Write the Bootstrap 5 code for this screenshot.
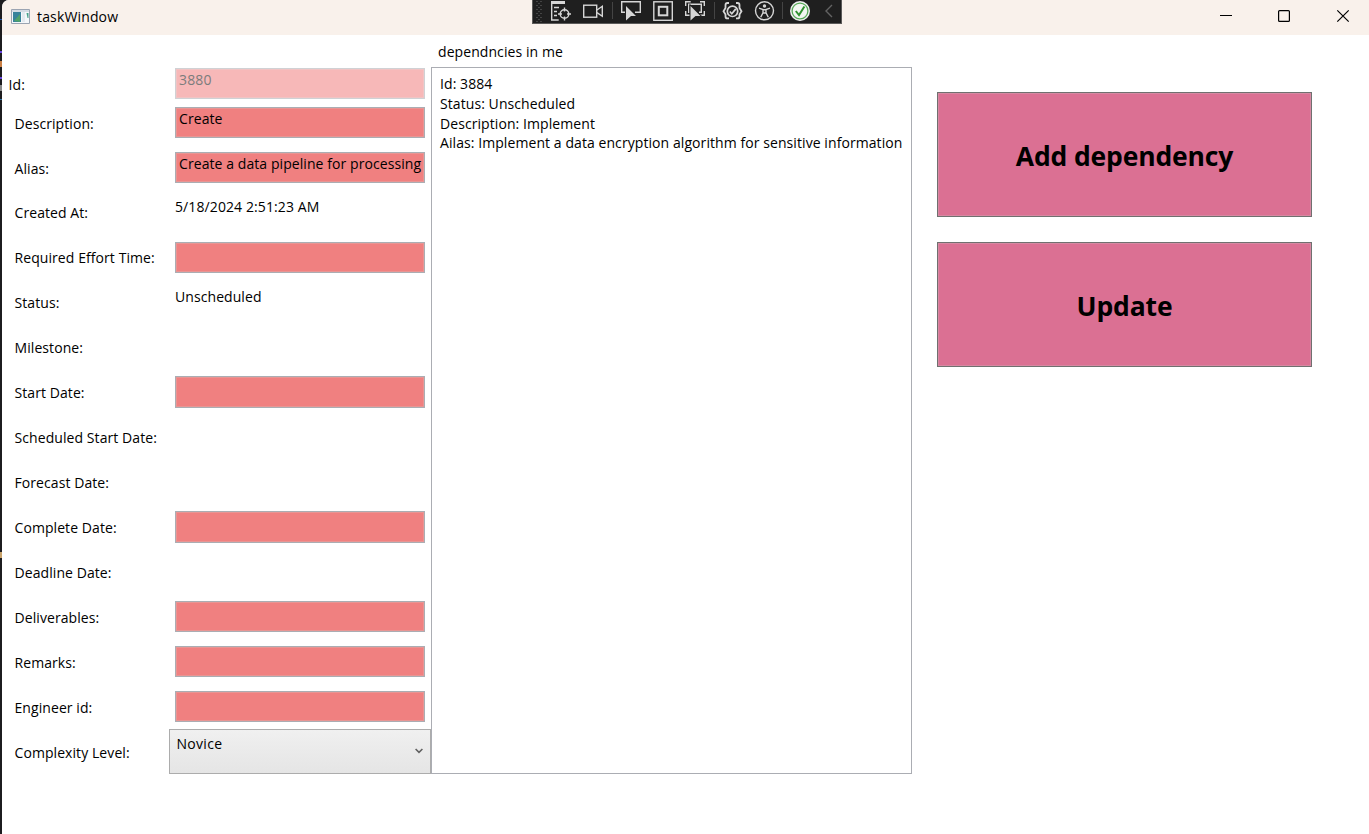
<!DOCTYPE html>
<html lang="en">
<head>
<meta charset="utf-8">
<title>taskWindow</title>
<link href="https://cdn.jsdelivr.net/npm/bootstrap@5.3.0/dist/css/bootstrap.min.css" rel="stylesheet">
<style>
body{width:1369px;height:834px;font:14px/20px "Open Sans","Noto Sans",sans-serif;letter-spacing:.075px;color:#000;
 background:linear-gradient(#25a 0 0) 0 19px/2px 1px no-repeat,linear-gradient(#64d 0 0) 0 51px/2px 2px no-repeat,linear-gradient(#c97f45 0 0) 0 61px/2px 6px no-repeat,linear-gradient(#64d 0 0) 0 77px/2px 2px no-repeat,linear-gradient(#888 0 0) 0 85px/2px 6px no-repeat,linear-gradient(#37a 0 0) 0 99px/2px 1px no-repeat,linear-gradient(#c9a36b 0 0) 0 552px/2px 6px no-repeat,#1c1c1f}
.window{margin-left:2px;height:834px;background:#fff;border-top-left-radius:7px}
.titlebar{height:35px;background:#f9f1eb}
.app-icon{margin:-2px 7px 0 9px}
.caption-text{letter-spacing:.15px;margin-top:-2px}
.debugbar{left:532px;top:0;width:310px;height:24px;background:#1f1f1f;border:1px solid #5b5a59;border-top:0}
.fields{width:429px;padding-top:26px}
.field-row{height:45px}
.field-row.first{height:39px}
.caption{width:167px;padding-left:12.5px;padding-top:1px}
.caption.low{padding-top:2px}
.first .caption{padding-left:6.5px;padding-top:14px}
.box{width:250px;height:31px;margin:7px 0 0 6px;border:1px solid #abadb3;background:#f08080;box-shadow:inset 0 0 0 1px #e99593;white-space:nowrap;overflow:hidden;padding:1px 3px}
.box.up{margin-top:6px}
.box.tall{height:32px}
.box.off{background:#f7b8b8;border-color:#d0d1d4;box-shadow:inset 0 0 0 1px #f1c4c4;color:#7c7c7c;letter-spacing:.15px}
.plain{margin:7px 0 0 6px}
.stamp{letter-spacing:.1px}
.combo{width:262px;height:45px;margin-top:-1px;padding:4px 7px 4px 6.5px;border:1px solid #acacac;background:linear-gradient(#f0f0f0,#e5e5e5)}
.combo span{letter-spacing:.3px}
.combo-arrow{margin-top:14px}
.deps{width:481px;padding-top:7px}
.deps-title{height:25px;padding-left:7px}
.deps-list{height:707px;border:1px solid #abadb3;padding:6px 8px;line-height:19.8px}
.actions{width:375px;margin-left:25px;padding-top:57px;gap:25px}
.action{height:125px;border:1px solid #707070;border-radius:0;background:#db7093;box-shadow:inset 0 0 0 1px #d788a2;color:#000;font:700 26.5px/36px "Open Sans",sans-serif;letter-spacing:-.15px;padding:2px 0 0}
</style>
</head>
<body>
<div class="window overflow-hidden">
 <header class="titlebar d-flex align-items-center">
  <svg class="app-icon" width="19" height="16" viewBox="0 0 19 16"><path d="M.5.5h18v14H.5z" fill="#f4f7fa" stroke="#9ba4b2"/><path d="M1 1h17v2H1z" fill="#d4dbe4"/><path d="M2 3h8v10H2z" fill="#38839b"/><path d="M3 12 9 5v8z" fill="#4fa26b"/><path d="M11 3h3v10h-3z" fill="#e3e9ef"/><path d="M15.5 4h2v5h-1z" fill="#48a28b"/></svg>
  <span class="caption-text">taskWindow</span>
  <svg class="ms-auto" width="160" height="35" viewBox="1209 0 160 35" fill="none" stroke="#000" stroke-width="1.2"><path d="M1220 15.5h12" stroke-width="1"/><rect x="1278.6" y="10.6" width="10.8" height="10.8" rx="1"/><path d="m1337.3 10.3 11.4 11.4m0-11.4-11.4 11.4"/></svg>
 </header>
 <div class="debugbar position-absolute">
  <svg class="d-block" width="308" height="23" viewBox="533 0 308 23" fill="none" stroke="#d6d6d6" stroke-width="1.4">
   <path d="M537 1v22M541 1v22" stroke="#555" stroke-dasharray="1 3"/><path d="M539 3v20" stroke="#555" stroke-dasharray="1 3"/>
   <path d="M551 1h14v3h-14z" fill="#d6d6d6" stroke="none"/><path d="M551.7 3v17h7M554 7.5h5M554 11.5h3M554 15.5h3"/>
   <circle cx="564.5" cy="14" r="4.3"/><path d="M564.5 7.5v4M564.5 16.5v4M558 14h4M567 14h4"/>
   <rect x="583.7" y="5.2" width="13" height="12"/><path d="m597 10 5.3-3.7v10L597 12.7"/>
   <path d="M612.5 2v17M714.5 2v17M782.5 2v17" stroke="#444" stroke-width="1"/>
   <path d="M625 12.3h-3.3V1.7h18.6v10.6H635"/><path d="m626 6 10 10h-5l-5 4.5z" fill="#d6d6d6" stroke="#1f1f1f" stroke-width="1.2" paint-order="stroke"/>
   <rect x="653.8" y="1.8" width="18.5" height="18.5"/><rect x="658.8" y="6.8" width="8.5" height="8.5" stroke-width="2"/>
   <path d="M685.7 6V1.7h5M700 1.7h4.3V6M704.3 11v4.3H700M690 15.3h-4.3V11M689.5 12.3h-.8V4.2h12.6v8.1H699"/><path d="m690.5 6 10 10h-5l-5 4.5z" fill="#d6d6d6" stroke="#1f1f1f" stroke-width="2" paint-order="stroke"/>
   <path d="M729 3h-1.5q-2 0-2 2v3l-2 3.2 2 3.2v2q0 2 2 2h1.5M736 3h1.5q2 0 2 2v3l2 3.2-2 3.2v2q0 2-2 2H736" stroke-width="1.8"/><circle cx="732.5" cy="11.3" r="5.2" stroke-width="1.7"/><path d="m729.8 11.5 2 2.2 4-4.8" stroke-width="1.7"/>
   <circle cx="764.5" cy="10.8" r="9"/><circle cx="764.5" cy="6" r="1.7" fill="#d6d6d6" stroke="none"/><path d="m759 8.2 4 1.3v3.3l-2.3 4.5m9.3-9.1-4 1.3v3.3l2.3 4.5M762.7 9.7h3.6M763 13h3"/>
   <circle cx="800" cy="11" r="9" fill="#f3f7f2" stroke="#eee" stroke-width="2"/><circle cx="800" cy="11" r="7.9" stroke="#58aa58" stroke-width="1.3"/><path d="m795.8 11 3.2 4 5.4-8.5" stroke="#2f912f" stroke-width="2"/>
   <path d="m832 5-6 6 6 6" stroke="#636363"/>
  </svg>
 </div>
 <main class="d-flex align-items-start">
  <section class="fields">
   <div class="field-row first d-flex"><div class="caption">Id:</div><div class="box off">3880</div></div>
   <div class="field-row d-flex"><div class="caption low align-self-center">Description:</div><div class="box">Create</div></div>
   <div class="field-row d-flex"><div class="caption low align-self-center">Alias:</div><div class="box">Create a data pipeline for processing</div></div>
   <div class="field-row d-flex"><div class="caption align-self-center">Created At:</div><div class="plain stamp">5/18/2024 2:51:23 AM</div></div>
   <div class="field-row d-flex"><div class="caption align-self-center">Required Effort Time:</div><div class="box"></div></div>
   <div class="field-row d-flex"><div class="caption align-self-center">Status:</div><div class="plain">Unscheduled</div></div>
   <div class="field-row d-flex"><div class="caption align-self-center">Milestone:</div></div>
   <div class="field-row d-flex"><div class="caption align-self-center">Start Date:</div><div class="box up tall"></div></div>
   <div class="field-row d-flex"><div class="caption align-self-center">Scheduled Start Date:</div></div>
   <div class="field-row d-flex"><div class="caption align-self-center">Forecast Date:</div></div>
   <div class="field-row d-flex"><div class="caption align-self-center">Complete Date:</div><div class="box up tall"></div></div>
   <div class="field-row d-flex"><div class="caption align-self-center">Deadline Date:</div></div>
   <div class="field-row d-flex"><div class="caption align-self-center">Deliverables:</div><div class="box up"></div></div>
   <div class="field-row d-flex"><div class="caption align-self-center">Remarks:</div><div class="box up"></div></div>
   <div class="field-row d-flex"><div class="caption align-self-center">Engineer id:</div><div class="box up"></div></div>
   <div class="field-row d-flex"><div class="caption align-self-center">Complexity Level:</div><div class="combo d-flex justify-content-between"><span>Novice</span><svg class="combo-arrow" width="8" height="6" viewBox="0 0 8 6" fill="none" stroke="#606060" stroke-width="1.6"><path d="m.6 1 3.4 3.3L7.4 1"/></svg></div></div>
  </section>
  <section class="deps">
   <div class="deps-title">dependncies in me</div>
   <div class="deps-list"><div>Id: 3884</div><div>Status: Unscheduled</div><div>Description: Implement</div><div>Ailas: Implement a data encryption algorithm for sensitive information</div></div>
  </section>
  <section class="actions d-flex flex-column">
   <button class="btn action">Add dependency</button>
   <button class="btn action">Update</button>
  </section>
 </main>
</div>
<script src="https://cdn.jsdelivr.net/npm/bootstrap@5.3.0/dist/js/bootstrap.bundle.min.js"></script>
</body>
</html>
